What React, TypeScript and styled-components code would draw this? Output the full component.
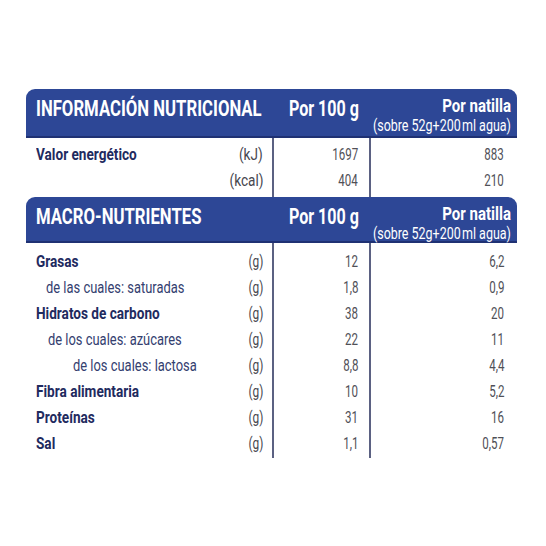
import styled, { createGlobalStyle } from 'styled-components'

const GlobalStyle = createGlobalStyle`
  html, body {
    margin: 0;
    padding: 0;
    background: #ffffff;
  }
  body {
    font-family: Roboto, "Liberation Sans", sans-serif;
  }
`

const BLUE = '#2d4796'
const NAVY = '#1f2b5f'
const LINE = '#5b6182'
const COLS = '247px 97px 147px'

type Row = { label: string; unit: string; per100: string; perServing: string; indent?: number; bold?: boolean }

const energy: Row[] = [
  { label: 'Valor energético', unit: '(kJ)', per100: '1697', perServing: '883', bold: true },
  { label: '', unit: '(kcal)', per100: '404', perServing: '210' },
]

const macros: Row[] = [
  { label: 'Grasas', unit: '(g)', per100: '12', perServing: '6,2', bold: true },
  { label: 'de las cuales: saturadas', unit: '(g)', per100: '1,8', perServing: '0,9', indent: 10 },
  { label: 'Hidratos de carbono', unit: '(g)', per100: '38', perServing: '20', bold: true },
  { label: 'de los cuales: azúcares', unit: '(g)', per100: '22', perServing: '11', indent: 12 },
  { label: 'de los cuales: lactosa', unit: '(g)', per100: '8,8', perServing: '4,4', indent: 37 },
  { label: 'Fibra alimentaria', unit: '(g)', per100: '10', perServing: '5,2', bold: true },
  { label: 'Proteínas', unit: '(g)', per100: '31', perServing: '16', bold: true },
  { label: 'Sal', unit: '(g)', per100: '1,1', perServing: '0,57', bold: true },
]

export default function App() {
  return (
    <>
      <GlobalStyle />
      <Page>
        <Table>
          <Section title="INFORMACIÓN NUTRICIONAL" rows={energy} headHeight={49} padTop={3} padBottom={4} />
          <Section title="MACRO-NUTRIENTES" rows={macros} headHeight={46} padTop={5} padBottom={2} />
        </Table>
      </Page>
    </>
  )
}

const Section = ({ title, rows, headHeight, padTop, padBottom }) => (
  <>
    <Header $height={headHeight}>
      <HeadTitle>
        <Squeeze $scale={0.76}>{title}</Squeeze>
      </HeadTitle>
      <HeadTitle $right>
        <Squeeze $scale={0.73} $right>Por 100 g</Squeeze>
      </HeadTitle>
      <HeadServing>
        <ServingTitle>
          <Squeeze $scale={0.79} $right>Por natilla</Squeeze>
        </ServingTitle>
        <ServingNote>
          <Squeeze $scale={0.78} $right>(sobre 52g+200&#8202;ml agua)</Squeeze>
        </ServingNote>
      </HeadServing>
    </Header>
    <Body $padTop={padTop} $padBottom={padBottom}>
      <Column>
        {rows.map((r, i) => (
          <LabelCell key={`l-${i}`} $indent={r.indent || 0}>
            <Label $bold={r.bold}>
              <Squeeze $scale={r.bold ? 0.8 : 0.76}>{r.label}</Squeeze>
            </Label>
            <Unit>
              <Squeeze $scale={r.unit === '(g)' ? 0.7 : 0.8} $right>{r.unit}</Squeeze>
            </Unit>
          </LabelCell>
        ))}
      </Column>
      <Column $divider $padRight={12}>
        {rows.map((r, i) => (
          <ValueCell key={`a-${i}`}>
            <Squeeze $scale={0.68} $right>{r.per100}</Squeeze>
          </ValueCell>
        ))}
      </Column>
      <Column $divider $padRight={13}>
        {rows.map((r, i) => (
          <ValueCell key={`b-${i}`}>
            <Squeeze $scale={0.68} $right>{r.perServing}</Squeeze>
          </ValueCell>
        ))}
      </Column>
    </Body>
  </>
)

const Page = styled.div`
  width: 546px;
  height: 546px;
  padding: 89px 0 0 26px;
  box-sizing: border-box;
`

const Table = styled.div`
  width: 491px;
  display: flex;
  flex-direction: column;
`

const Squeeze = styled.span<{ $scale: number; $right?: boolean }>`
  display: inline-block;
  flex: none;
  white-space: nowrap;
  transform: scaleX(${({ $scale }) => $scale});
  transform-origin: ${({ $right }) => ($right ? 'right' : 'left')} center;
`

const Header = styled.div<{ $height: number }>`
  display: grid;
  grid-template-columns: ${COLS};
  height: ${({ $height }) => $height}px;
  box-sizing: border-box;
  background: ${BLUE};
  border-bottom: 2px solid #1f3173;
  border-radius: 9px 9px 0 0;
  color: #ffffff;
`

const HeadTitle = styled.div<{ $right?: boolean }>`
  display: flex;
  align-items: flex-start;
  justify-content: ${({ $right }) => ($right ? 'flex-end' : 'flex-start')};
  min-width: 0;
  font-size: 22px;
  line-height: 22px;
  font-weight: 700;
  padding-top: 9px;
  padding-left: ${({ $right }) => ($right ? '0' : '10px')};
  padding-right: ${({ $right }) => ($right ? '11px' : '0')};
`

const HeadServing = styled.div`
  display: flex;
  flex-direction: column;
  align-items: flex-end;
  min-width: 0;
  padding: 7px 6px 0 0;
`

const ServingTitle = styled.div`
  display: flex;
  justify-content: flex-end;
  font-size: 19px;
  line-height: 19px;
  font-weight: 700;
`

const ServingNote = styled.div`
  display: flex;
  justify-content: flex-end;
  font-size: 16px;
  line-height: 16px;
  font-weight: 400;
  margin-top: 3px;
`

const Body = styled.div<{ $padTop: number; $padBottom: number }>`
  display: grid;
  grid-template-columns: ${COLS};
  & > * {
    padding-top: ${({ $padTop }) => $padTop}px;
    padding-bottom: ${({ $padBottom }) => $padBottom}px;
  }
`

const Column = styled.div<{ $divider?: boolean; $padRight?: number }>`
  display: flex;
  flex-direction: column;
  min-width: 0;
  border-left: ${({ $divider }) => ($divider ? `2px solid ${LINE}` : 'none')};
  padding-right: ${({ $padRight }) => $padRight || 0}px;
  margin-left: ${({ $divider }) => ($divider ? '-1px' : '0')};
`

const LabelCell = styled.div<{ $indent: number }>`
  display: flex;
  justify-content: space-between;
  align-items: center;
  height: 26px;
  padding: 0 10px 0 ${({ $indent }) => 10 + $indent}px;
  font-size: 17px;
  line-height: 26px;
`

const Label = styled.span<{ $bold?: boolean }>`
  font-weight: ${({ $bold }) => ($bold ? 700 : 400)};
  color: ${({ $bold }) => ($bold ? NAVY : '#34406f')};
`

const Unit = styled.span`
  color: #47474f;
`

const ValueCell = styled.div`
  display: flex;
  justify-content: flex-end;
  height: 26px;
  line-height: 26px;
  font-size: 17px;
  color: #505057;
`
